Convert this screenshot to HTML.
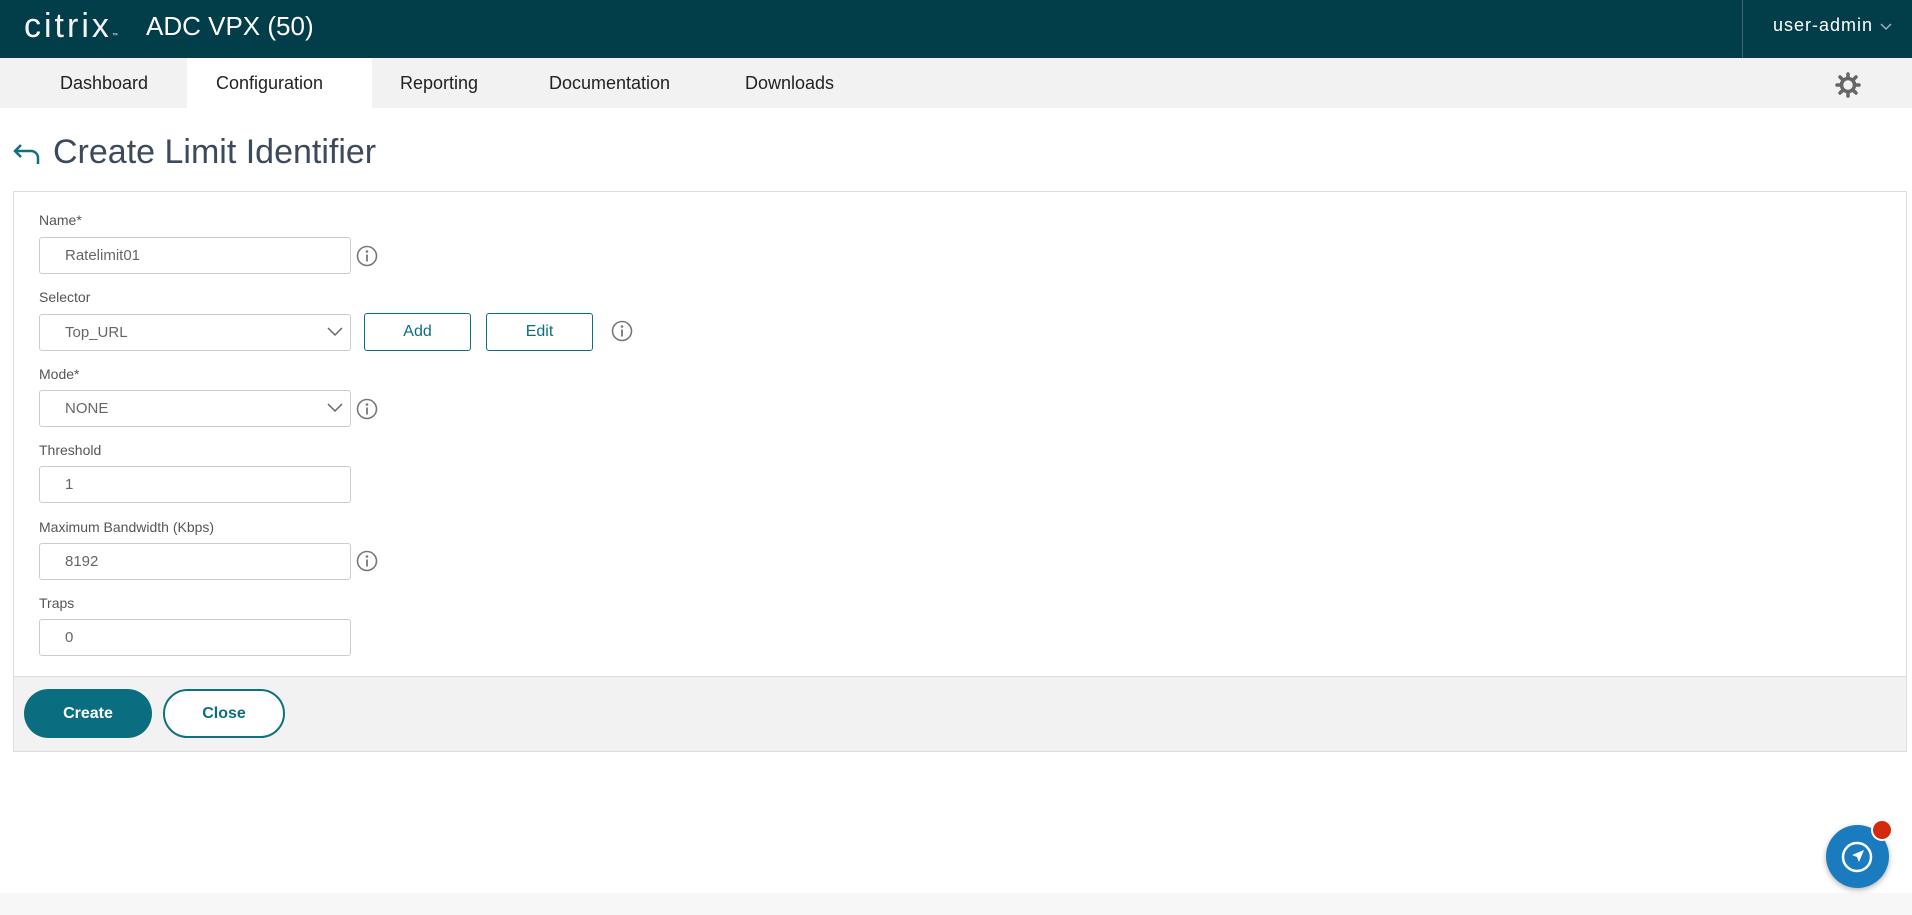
<!DOCTYPE html>
<html><head><meta charset="utf-8"><style>
*{box-sizing:border-box;margin:0;padding:0}
body{width:1912px;height:915px;background:#fff;font-family:"Liberation Sans",sans-serif;position:relative;overflow:hidden}
.hdr{position:absolute;left:0;top:0;width:1912px;height:58px;background:#023d4a}
.abs{position:absolute}
.nav{position:absolute;top:58px;left:0;width:1912px;height:50px;background:#f2f2f2}
.tab{position:absolute;top:0;height:50px;line-height:50px;font-size:18px;color:#222}
.lbl{position:absolute;left:39px;font-size:14px;color:#555}
.inp{position:absolute;left:39px;width:312px;height:37px;border:1px solid #ccc;border-radius:3px;font-size:15px;color:#666;padding-left:25px;line-height:35px;background:#fff}
.chev{position:absolute;right:7px;top:10px}
.info{position:absolute;width:22px;height:22px}
.btn{position:absolute;height:38px;border:1.5px solid #10707f;border-radius:3px;color:#0b6e80;font-size:16px;text-align:center;line-height:35px;background:#fff}
</style></head><body>
<div class="hdr"></div>
<div class="abs" style="left:24px;top:7px;font-size:34px;color:#f4f4f4;letter-spacing:3px;font-weight:300">citrix<span style="font-size:6px;letter-spacing:0">™</span></div>
<div class="abs" style="left:146px;top:11px;font-size:26px;color:#fff">ADC VPX (50)</div>
<div class="abs" style="left:1742px;top:0;width:1px;height:58px;background:#3d6570"></div>
<div class="abs" style="left:1773px;top:15px;font-size:18px;color:#fff;letter-spacing:1px">user-admin</div>
<svg class="abs" style="left:1880px;top:22px" width="12" height="10"><path d="M1 2l5 5 5-5" stroke="#aac" fill="none" stroke-width="1.5"/></svg>
<div class="nav"></div>
<div class="abs" style="left:187px;top:58px;width:185px;height:50px;background:#fff"></div>
<div class="tab" style="left:60px;top:58px">Dashboard</div>
<div class="tab" style="left:216px;top:58px">Configuration</div>
<div class="tab" style="left:400px;top:58px">Reporting</div>
<div class="tab" style="left:549px;top:58px">Documentation</div>
<div class="tab" style="left:745px;top:58px">Downloads</div>
<svg class="abs" style="left:1835px;top:72px" width="26" height="26" viewBox="0 0 26 26"><g stroke="#666" stroke-width="3.5" stroke-linecap="round"><path d="M13 2v4M13 20v4M2 13h4M20 13h4M5 5l3 3M18 18l3 3M21 5l-3 3M8 18l-3 3"/></g><circle cx="13" cy="13" r="6.5" fill="none" stroke="#666" stroke-width="3.5"/></svg>
<svg class="abs" style="left:12px;top:142px" width="30" height="24" viewBox="0 0 30 24"><path d="M9 3L3 9l6 6M3 9h16a7 7 0 0 1 7 7v6" stroke="#10707f" stroke-width="2.5" fill="none"/></svg>
<div class="abs" style="left:53px;top:133px;font-size:34px;color:#3d4a5c">Create Limit Identifier</div>
<div class="abs" style="left:13px;top:191px;width:1894px;height:561px;border:1px solid #ddd;background:#fff"></div>
<div class="abs" style="left:14px;top:676px;width:1892px;height:75px;background:#f2f2f2;border-top:1px solid #ddd"></div>
<div class="lbl" style="top:212px">Name*</div>
<div class="inp" style="top:237px">Ratelimit01</div>
<div class="lbl" style="top:289px">Selector</div>
<div class="inp" style="top:314px">Top_URL<svg class="chev" width="16" height="14"><path d="M1 3l7 7 7-7" stroke="#666" fill="none" stroke-width="1.5"/></svg></div>
<div class="btn" style="left:364px;top:313px;width:107px">Add</div>
<div class="btn" style="left:486px;top:313px;width:107px">Edit</div>
<div class="lbl" style="top:366px">Mode*</div>
<div class="inp" style="top:390px">NONE<svg class="chev" width="16" height="14"><path d="M1 3l7 7 7-7" stroke="#666" fill="none" stroke-width="1.5"/></svg></div>
<div class="lbl" style="top:442px">Threshold</div>
<div class="inp" style="top:466px">1</div>
<div class="lbl" style="top:519px">Maximum Bandwidth (Kbps)</div>
<div class="inp" style="top:543px">8192</div>
<div class="lbl" style="top:595px">Traps</div>
<div class="inp" style="top:619px">0</div>
<svg width="0" height="0" style="position:absolute"><defs><g id="i"><circle cx="11" cy="11" r="9.5" fill="none" stroke="#777" stroke-width="1.6"/><circle cx="11" cy="6.5" r="1.3" fill="#777"/><path d="M11 9.5v7" stroke="#777" stroke-width="1.8"/></g></defs></svg>
<svg class="info" style="left:356px;top:245px"><use href="#i"/></svg>
<svg class="info" style="left:611px;top:320px"><use href="#i"/></svg>
<svg class="info" style="left:356px;top:398px"><use href="#i"/></svg>
<svg class="info" style="left:356px;top:550px"><use href="#i"/></svg>
<div class="abs" style="left:24px;top:689px;width:128px;height:49px;border-radius:25px;background:#0b6e80;color:#fff;font-size:16px;font-weight:bold;text-align:center;line-height:49px">Create</div>
<div class="abs" style="left:163px;top:689px;width:122px;height:49px;border-radius:25px;border:2px solid #10707f;background:#fff;color:#0b6e80;font-size:16px;font-weight:bold;text-align:center;line-height:45px">Close</div>
<div class="abs" style="left:0;top:893px;width:1912px;height:22px;background:#f7f7f7"></div>
<div class="abs" style="left:1826px;top:825px;width:63px;height:63px;border-radius:50%;background:#1b7bbf;box-shadow:0 2px 6px rgba(0,0,0,.3)"></div>
<svg class="abs" style="left:1840px;top:840px" width="34" height="34" viewBox="0 0 34 34"><circle cx="17" cy="17" r="14" fill="none" stroke="#fff" stroke-width="2.5"/><path d="M24 10l-12 5 5 2 2 5z" fill="#fff"/></svg>
<div class="abs" style="left:1871px;top:819px;width:22px;height:22px;border-radius:50%;background:#d32a0e;border:2px solid #fff"></div>
</body></html>
